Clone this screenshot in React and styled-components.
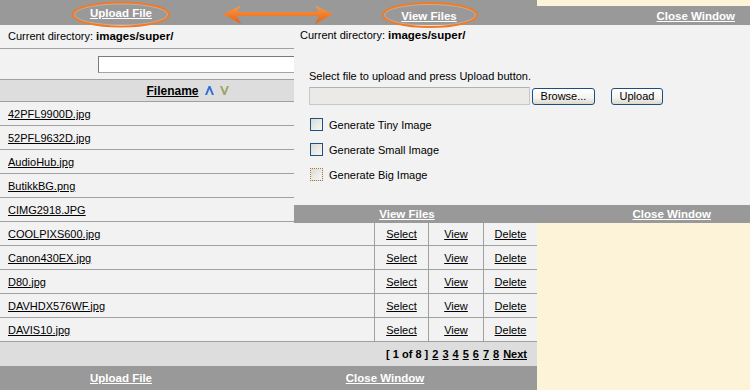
import React from "react";
import styled, { createGlobalStyle } from "styled-components";

const files = [
  "42PFL9900D.jpg",
  "52PFL9632D.jpg",
  "AudioHub.jpg",
  "ButikkBG.png",
  "CIMG2918.JPG",
  "COOLPIXS600.jpg",
  "Canon430EX.jpg",
  "D80.jpg",
  "DAVHDX576WF.jpg",
  "DAVIS10.jpg",
];

const GlobalStyle = createGlobalStyle`
  body {
    margin: 0;
    background: #fdf3d9;
    font-family: "Liberation Sans", Arial, sans-serif;
    font-size: 11px;
    color: #000;
  }
`;

function App() {
  return (
    <>
      <GlobalStyle />
      <Page>
        <FileManager>
          <Bar $cols="242px 286px" $h={25}>
            <BarCell><BarLink href="#">Upload File</BarLink></BarCell>
            <BarCell><BarLink href="#">Close Window</BarLink></BarCell>
          </Bar>
          <DirRow>
            Current directory: <b>images/super/</b>
          </DirRow>
          <FilterRow>
            <FilterInput type="text" />
          </FilterRow>
          <HeaderRow>
            <SortLink href="#">Filename</SortLink>
            <SortIcon viewBox="0 0 9 9">
              <path d="M0 9 L3.6 0 L5.4 0 L9 9 L7 9 L4.5 3 L2 9 Z" fill="#2f6fd8" />
            </SortIcon>
            <SortIcon viewBox="0 0 9 9">
              <path d="M0 0 L3.6 9 L5.4 9 L9 0 L7 0 L4.5 6 L2 0 Z" fill="#9ea46a" />
            </SortIcon>
          </HeaderRow>
          {files.map((f) => (
            <FileRow key={f}>
              <NameCell><RowLink href="#">{f}</RowLink></NameCell>
              <ActionCell><RowLink href="#">Select</RowLink></ActionCell>
              <ActionCell><RowLink href="#">View</RowLink></ActionCell>
              <ActionCell $last><RowLink href="#">Delete</RowLink></ActionCell>
            </FileRow>
          ))}
          <PagerRow>
            [ 1 of 8 ]
            {["2", "3", "4", "5", "6", "7", "8", "Next"].map((p) => (
              <PageLink key={p} href="#">{p}</PageLink>
            ))}
          </PagerRow>
          <Bar $cols="242px 286px" $h={24}>
            <BarCell><BarLink href="#">Upload File</BarLink></BarCell>
            <BarCell><BarLink href="#">Close Window</BarLink></BarCell>
          </Bar>
        </FileManager>

        <UploadWindow>
          <Bar $cols="270px 1fr" $h={19}>
            <BarCell><BarLink href="#">View Files</BarLink></BarCell>
            <BarCell $right={15}><BarLink href="#">Close Window</BarLink></BarCell>
          </Bar>
          <UploadBody>
            <UploadDir>
              Current directory: <b>images/super/</b>
            </UploadDir>
            <Hint>Select file to upload and press Upload button.</Hint>
            <FileLine>
              <FileField />
              <XpButton $w={63}>Browse...</XpButton>
              <XpButton $w={52} $gap={16}>Upload</XpButton>
            </FileLine>
            <Checks>
              <CheckLine>
                <Box type="checkbox" />
                Generate Tiny Image
              </CheckLine>
              <CheckLine>
                <Box type="checkbox" />
                Generate Small Image
              </CheckLine>
              <CheckLine>
                <Box type="checkbox" $focus />
                Generate Big Image
              </CheckLine>
            </Checks>
          </UploadBody>
          <Bar $cols="226px 1fr" $h={18}>
            <BarCell><BarLink href="#">View Files</BarLink></BarCell>
            <BarCell $right={39}><BarLink href="#">Close Window</BarLink></BarCell>
          </Bar>
        </UploadWindow>

        <Marks viewBox="0 0 750 390">
          <defs>
            <linearGradient id="arr" x1="0" y1="0" x2="0" y2="1">
              <stop offset="0" stopColor="#fb9a4a" />
              <stop offset="1" stopColor="#e8620f" />
            </linearGradient>
          </defs>
          <ellipse cx="121" cy="14.5" rx="48" ry="12" fill="none" stroke="#f07a25" strokeWidth="2" />
          <ellipse cx="121" cy="14.5" rx="46.5" ry="10.5" fill="none" stroke="#f9c49a" strokeWidth="0.8" opacity="0.6" />
          <ellipse cx="430" cy="15" rx="47" ry="12" fill="none" stroke="#f07a25" strokeWidth="2" />
          <ellipse cx="430" cy="15" rx="45.5" ry="10.5" fill="none" stroke="#f9c49a" strokeWidth="0.8" opacity="0.6" />
          <path
            d="M223 14 L241 5.5 L237 12 L319 12 L315 5.5 L333 14 L315 24 L319 16 L237 16 L241 24 Z"
            fill="url(#arr)"
          />
        </Marks>
      </Page>
    </>
  );
}

export default App;

const Page = styled.div`
  position: relative;
  width: 750px;
  height: 390px;
  overflow: hidden;
`;

const FileManager = styled.div`
  width: 537px;
  background: #f2f2f2;
  display: flex;
  flex-direction: column;
`;

const Bar = styled.div`
  display: grid;
  grid-template-columns: ${(p) => p.$cols};
  height: ${(p) => p.$h}px;
  background: #999999;
  align-items: center;
`;

const BarCell = styled.div`
  text-align: ${(p) => (p.$right ? "right" : "center")};
  padding-right: ${(p) => p.$right || 0}px;
`;

const BarLink = styled.a`
  color: #fff;
  font-weight: bold;
  font-size: 11.5px;
  text-decoration: underline;
`;

const DirRow = styled.div`
  height: 23px;
  line-height: 23px;
  padding-left: 8px;
  border-bottom: 1px solid #a0a0a0;

  b {
    font-size: 11.5px;
  }
`;

const FilterRow = styled.div`
  height: 30px;
  display: flex;
  align-items: center;
  padding-left: 98px;
  border-bottom: 1px solid #a0a0a0;
`;

const FilterInput = styled.input`
  width: 300px;
  height: 17px;
  box-sizing: border-box;
  border: 1px solid #a5a5a5;
  border-top-color: #7a7a7a;
  border-left-color: #7a7a7a;
  background: #fff;
  padding: 0;
  margin: 0;
`;

const HeaderRow = styled.div`
  height: 22px;
  width: 537px;
  box-sizing: border-box;
  padding-right: 162px;
  display: flex;
  align-items: center;
  justify-content: center;
  gap: 6px;
  background: #dddddd;
  border-bottom: 1px solid #a0a0a0;
`;

const SortLink = styled.a`
  color: #000;
  font-weight: bold;
  font-size: 12px;
  text-decoration: underline;
`;

const SortIcon = styled.svg`
  width: 9px;
  height: 9px;
  margin-bottom: 1px;
`;

const FileRow = styled.div`
  display: grid;
  grid-template-columns: 375px 54px 55px 1fr;
  height: 23px;
  border-bottom: 1px solid #a0a0a0;
`;

const NameCell = styled.div`
  display: flex;
  align-items: center;
  padding-left: 8px;
  border-right: 1px solid #a0a0a0;
`;

const ActionCell = styled.div`
  display: flex;
  align-items: center;
  justify-content: center;
  border-right: ${(p) => (p.$last ? "none" : "1px solid #a0a0a0")};
`;

const RowLink = styled.a`
  color: #000;
  text-decoration: underline;
`;

const PagerRow = styled.div`
  height: 24px;
  background: #dddddd;
  display: flex;
  align-items: center;
  justify-content: flex-end;
  gap: 4px;
  padding-right: 10px;
  font-weight: bold;
`;

const PageLink = styled.a`
  color: #000;
  text-decoration: underline;
  font-weight: bold;
`;

const UploadWindow = styled.div`
  position: absolute;
  left: 294px;
  top: 6px;
  width: 456px;
  background: #f2f2f2;
  display: flex;
  flex-direction: column;
`;

const UploadBody = styled.div`
  height: 180px;
  padding-left: 6px;
  display: flex;
  flex-direction: column;

  b {
    font-size: 11.5px;
  }
`;

const UploadDir = styled.div`
  height: 20px;
  line-height: 20px;
`;

const Hint = styled.div`
  margin-top: 24px;
  padding-left: 9px;
  line-height: 14px;
`;

const FileLine = styled.div`
  display: flex;
  align-items: center;
  padding-left: 9px;
  margin-top: 4px;
`;

const FileField = styled.div`
  width: 221px;
  height: 18px;
  box-sizing: border-box;
  background: #ebeae6;
  border: 1px solid #c3c9cf;
  border-top-color: #a9b4bf;
`;

const XpButton = styled.button`
  width: ${(p) => p.$w}px;
  height: 17px;
  margin-left: ${(p) => p.$gap || 2}px;
  box-sizing: border-box;
  padding: 0;
  border: 1px solid #1d4f7e;
  border-radius: 3px;
  background: linear-gradient(#ffffff, #f3f3ef 60%, #dcd8cc);
  font-family: "Liberation Sans", Arial, sans-serif;
  font-size: 11px;
  color: #000;
`;

const Checks = styled.div`
  display: flex;
  flex-direction: column;
  gap: 12px;
  margin-top: 13px;
  padding-left: 10px;
`;

const CheckLine = styled.label`
  display: flex;
  align-items: center;
  gap: 6px;
  height: 13px;
`;

const Box = styled.input`
  appearance: none;
  margin: 0;
  width: 13px;
  height: 13px;
  box-sizing: border-box;
  border: 1px ${(p) => (p.$focus ? "dotted #b0703a" : "solid #1c5180")};
  background: linear-gradient(135deg, #dcdcd6, #f6f6f4);
`;

const Marks = styled.svg`
  position: absolute;
  left: 0;
  top: 0;
  width: 750px;
  height: 390px;
  pointer-events: none;
`;
